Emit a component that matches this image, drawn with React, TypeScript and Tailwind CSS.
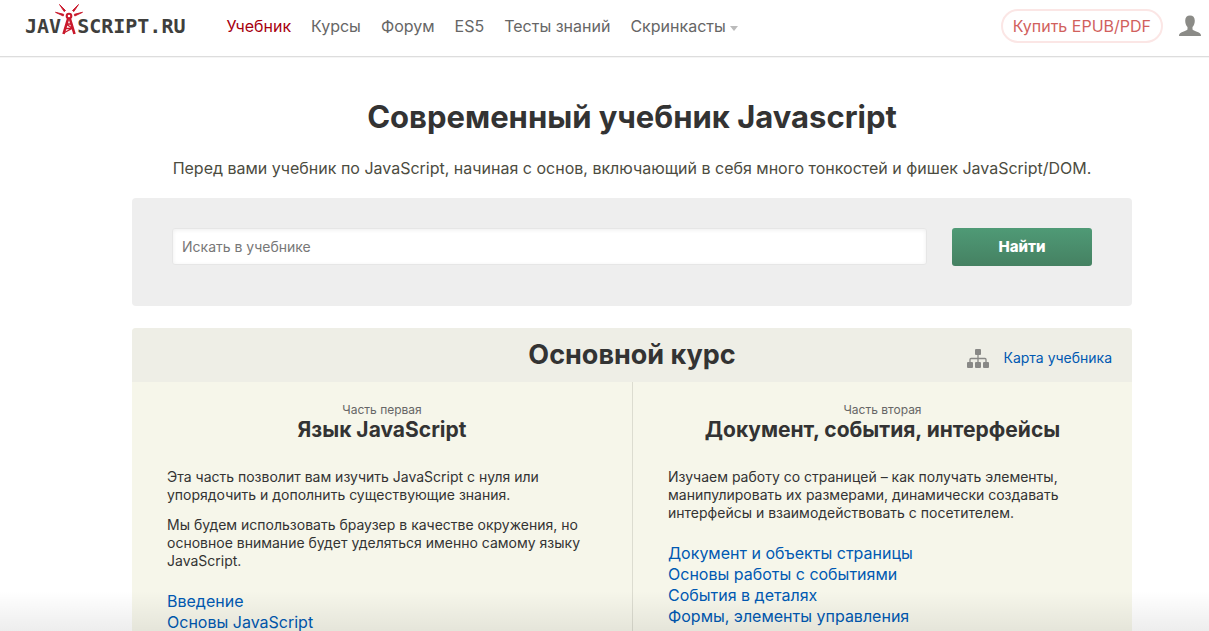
import React from "react";

const navItems = ["Курсы", "Форум", "ES5", "Тесты знаний"];

function Logo() {
  return (
    <a href="#" aria-label="JAVASCRIPT.RU" className="flex h-9 items-end font-['DejaVu_Sans_Mono',monospace] text-[20px] leading-5 font-bold text-[#3f3f3d]">
      <span>JAV</span>
      <svg viewBox="0 0 28 32" className="-mx-[6px] h-8 w-7" fill="none" stroke="#c9182b">
        <path d="M13 15 8.500 30M15 15 19.500 30" strokeWidth="2.6" />
        <path d="M11.500 20h5M10.500 24.500h7M11.800 20.500l5.200 3.500M17 24.500 9.500 28.500" strokeWidth="1.400" />
        <circle cx="14" cy="12" r="2.300" strokeWidth="2.100" />
        <path d="M4.500 .5 10.500 6.500 9.200 7.600zM23.500 .5 17.500 6.500 18.800 7.600zM.5 8.300 8.700 10.300 8.200 12zM27.500 8.300 19.300 10.300 19.800 12z" strokeWidth=".9" fill="#c9182b" />
      </svg>
      <span>SCRIPT.RU</span>
    </a>
  );
}

function UserIcon() {
  return (
    <svg viewBox="0 0 22 22" className="h-[22px] w-[22px]" fill="#8b8b87">
      <path d="M11 .5c3 0 4.800 1.800 4.800 5.200 0 3-1.100 5-2.300 6.300v2.500c.8 1.300 4 1.800 6.300 3 1.600.8 2.200 1.800 2.200 3.500H0c0-1.700.6-2.700 2.200-3.500 2.300-1.200 5.500-1.700 6.300-3V12C7.300 10.700 6.200 8.700 6.200 5.700 6.200 2.300 8 .5 11 .5z" />
    </svg>
  );
}

function SitemapIcon() {
  return (
    <svg viewBox="0 0 22 19" className="h-[19px] w-[22px]" fill="#888886">
      <rect x="8" y="0" width="6" height="6" rx="1" />
      <rect x="0" y="13" width="6" height="6" rx="1" />
      <rect x="8" y="13" width="6" height="6" rx="1" />
      <rect x="16" y="13" width="6" height="6" rx="1" />
      <path d="M11 5v9M3 14v-3.500q0-1 1-1h14q1 0 1 1V14" fill="none" stroke="#888886" strokeWidth="1.300" />
    </svg>
  );
}

type PartProps = { label: string; title: string; paragraphs: string[]; links: string[] };

const parts: PartProps[] = [
  {
    label: "Часть первая",
    title: "Язык JavaScript",
    paragraphs: [
      "Эта часть позволит вам изучить JavaScript с нуля или упорядочить и дополнить существующие знания.",
      "Мы будем использовать браузер в качестве окружения, но основное внимание будет уделяться именно самому языку JavaScript.",
    ],
    links: ["Введение", "Основы JavaScript"],
  },
  {
    label: "Часть вторая",
    title: "Документ, события, интерфейсы",
    paragraphs: [
      "Изучаем работу со страницей – как получать элементы, манипулировать их размерами, динамически создавать интерфейсы и взаимодействовать с посетителем.",
    ],
    links: ["Документ и объекты страницы", "Основы работы с событиями", "События в деталях", "Формы, элементы управления"],
  },
];

function Part({ label, title, paragraphs, links }: PartProps) {
  return (
    <section className="border-[#dcdcd0] px-[35px] pt-5 pb-10 last:border-l">
      <div className="text-center">
        <p className="text-[12px] leading-4 text-[#666]">{label}</p>
        <h3 className="text-[21px] leading-6 font-bold">{title}</h3>
      </div>
      <div className="mt-[26px] space-y-3 text-[14px] leading-[18px]">
        {paragraphs.map((p) => <p key={p}>{p}</p>)}
      </div>
      <ul className="mt-[21px] text-[16px] leading-[21px] text-[#0059b2]">
        {links.map((l) => <li key={l}><a href="#">{l}</a></li>)}
      </ul>
    </section>
  );
}

export default function App() {
  return (
    <div className="relative h-screen overflow-hidden bg-white font-[Inter,sans-serif] text-[#333]">
      <header className="flex h-[57px] items-start justify-between border-b border-[#ddd] pl-[25px] pr-2 shadow-[0_1px_0_#f5f5f5]">
        <div className="flex">
          <Logo />
          <nav className="ml-[41px] flex gap-5 pt-[15px] text-[16px] leading-[22px] text-[#666]">
            <a href="#" className="text-[#a7000e]">Учебник</a>
            {navItems.map((n) => <a key={n} href="#">{n}</a>)}
            <a href="#" className="flex items-center gap-1">
              Скринкасты
              <svg viewBox="0 0 8 5" className="mt-1 h-[5px] w-2" fill="#bbb"><path d="M0 0h8L4 5z" /></svg>
            </a>
          </nav>
        </div>
        <div className="flex items-center gap-4 pt-[9px]">
          <a href="#" className="flex h-[34px] items-center rounded-full border-2 border-[#fbe6e5] px-[10px] text-[16px] text-[#d1615d]">Купить EPUB/PDF</a>
          <a href="#" aria-label="Профиль"><UserIcon /></a>
        </div>
      </header>
      <div className="pt-10 pl-[55px]">
        <main className="mx-auto w-full max-w-[1000px]">
          <h1 className="text-center text-[31px] leading-10 font-bold">Современный учебник Javascript</h1>
          <p className="mt-[21px] text-center text-[16px] leading-5 text-[#4c4c3f]">Перед вами учебник по JavaScript, начиная с основ, включающий в себя много тонкостей и фишек JavaScript/DOM.</p>
          <form className="mt-5 flex gap-[25px] rounded bg-[#eee] px-10 pt-[30px] pb-10">
            <input aria-label="Искать в учебнике" placeholder="Искать в учебнике" className="h-[37px] min-w-0 flex-1 rounded-[3px] border border-[#e6e6e6] bg-white px-[9px] text-[14px] shadow-[inset_0_1px_4px_#eee] placeholder:text-[#777]" />
            <button className="h-[38px] w-[140px] rounded-[3px] bg-linear-to-b from-[#4f9a76] to-[#458162] text-[15px] font-extrabold text-white">Найти</button>
          </form>
          <div className="mt-[22px] overflow-hidden rounded-t bg-[#f6f6ea]">
            <div className="grid h-[54px] grid-cols-[1fr_auto_1fr] items-center bg-[#eeeee6] pr-5">
              <h2 className="col-start-2 pl-5 text-[27px] leading-9 font-bold">Основной курс</h2>
              <a href="#" className="mt-[6px] flex items-center gap-[14px] justify-self-end text-[14px] leading-5 text-[#0059b2]">
                <SitemapIcon />
                Карта учебника
              </a>
            </div>
            <div className="grid grid-cols-2">
              {parts.map((p) => <Part key={p.title} {...p} />)}
            </div>
          </div>
        </main>
      </div>
      <div className="pointer-events-none absolute inset-x-0 bottom-0 h-10 bg-linear-to-b from-transparent to-black/7" />
    </div>
  );
}
